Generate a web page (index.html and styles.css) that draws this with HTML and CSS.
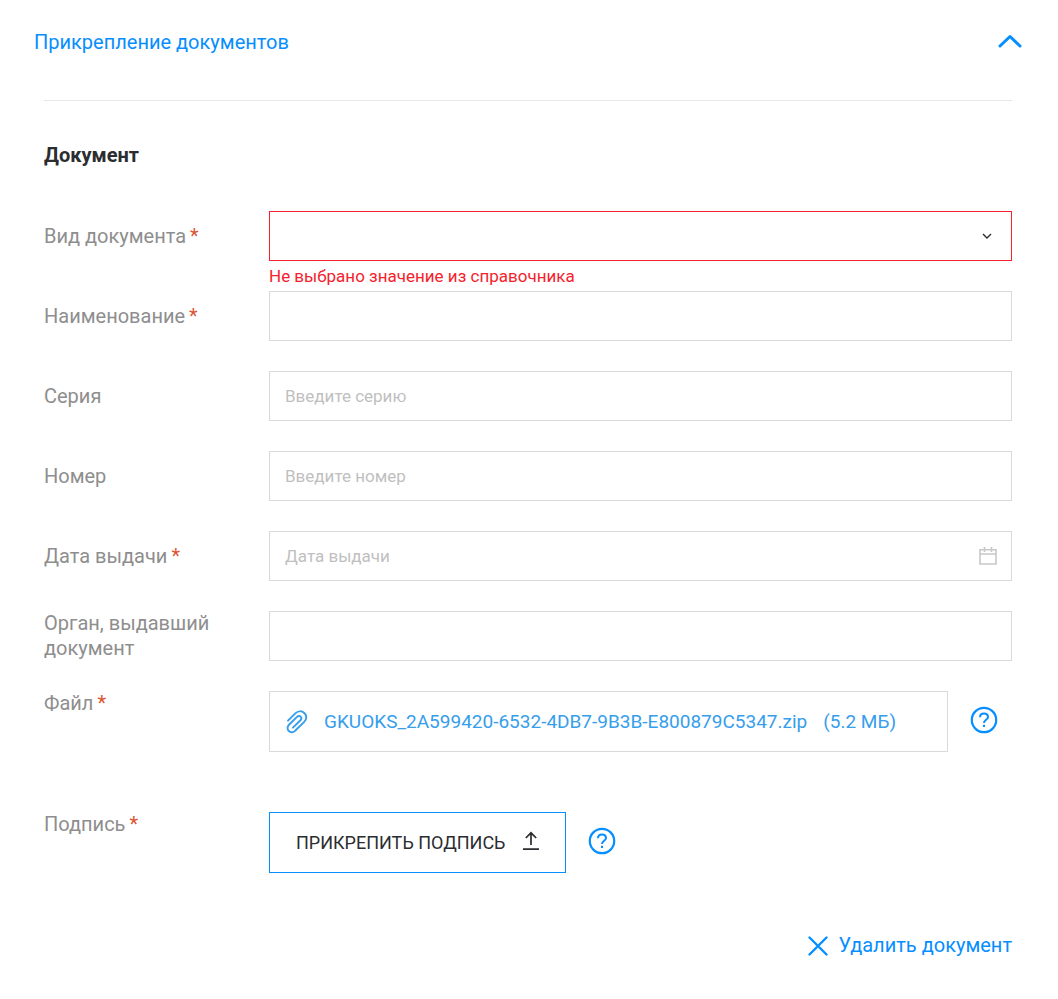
FILE: index.html
```
<!DOCTYPE html>
<html lang="ru">
<head>
    <meta charset="UTF-8">
    <meta name="viewport" content="width=device-width, initial-scale=1.0">
    <title>Прикрепление документов</title>
    <link rel="stylesheet" href="styles.css">
</head>
<body>
    <main class="panel">
        <header class="panel-header">
            <h1 class="panel-title">Прикрепление документов</h1>
            <button type="button" class="icon-button" aria-label="Свернуть" aria-expanded="true">
                <svg width="24" height="18" viewBox="0 0 24 18" fill="none" stroke="currentColor" stroke-width="3" stroke-linecap="round" stroke-linejoin="round">
                    <path d="M2 12L12 2.5L22 12"></path>
                </svg>
            </button>
        </header>

        <form class="document">
            <h2 class="document-title">Документ</h2>

            <div class="row row-error">
                <label class="label" for="doc-type">Вид документа<span class="required">*</span></label>
                <div class="field">
                    <select id="doc-type" class="control control-invalid" aria-describedby="doc-type-error">
                        <option value=""></option>
                    </select>
                    <svg class="field-icon arrow" width="10" height="6" viewBox="0 0 10 6" fill="none" stroke="currentColor" stroke-width="1.4">
                        <path d="M1 1L5 5L9 1"></path>
                    </svg>
                </div>
                <p class="error" id="doc-type-error">Не выбрано значение из справочника</p>
            </div>

            <div class="row">
                <label class="label" for="doc-name">Наименование<span class="required">*</span></label>
                <input type="text" id="doc-name" class="control">
            </div>

            <div class="row">
                <label class="label" for="doc-series">Серия</label>
                <input type="text" id="doc-series" class="control" placeholder="Введите серию">
            </div>

            <div class="row">
                <label class="label" for="doc-number">Номер</label>
                <input type="text" id="doc-number" class="control" placeholder="Введите номер">
            </div>

            <div class="row">
                <label class="label" for="doc-date">Дата выдачи<span class="required">*</span></label>
                <div class="field">
                    <input type="text" id="doc-date" class="control" placeholder="Дата выдачи">
                    <svg class="field-icon calendar" width="18" height="18" viewBox="0 0 18 18" fill="none" stroke="currentColor" stroke-width="1.6">
                        <path d="M1 2.8H17V17H1ZM1 7H17M5.5 0V5M12.5 0V5"></path>
                    </svg>
                </div>
            </div>

            <div class="row">
                <label class="label" for="doc-issuer">Орган, выдавший документ</label>
                <input type="text" id="doc-issuer" class="control">
            </div>

            <div class="row row-top">
                <span class="label">Файл<span class="required">*</span></span>
                <div class="attachment">
                    <div class="file-box">
                        <a href="#" class="file-link">
                            <svg width="22" height="24" viewBox="0 0 22 24" fill="none" stroke="currentColor" stroke-width="1.9" stroke-linecap="round" stroke-linejoin="round">
                                <path d="M2 10.6L9.3 3.4C12 .7 15.8.7 18.3 3C21 5.6 20.8 9.2 18.2 11.8L9.6 20.3C7.4 22.6 4.6 22.8 2.8 21C1 19.2 1.1 16.6 3.2 14.5L11 6.9C12.2 5.7 13.7 5.7 14.7 6.7C15.7 7.7 15.6 9.1 14.5 10.3L6.9 17.6"></path>
                            </svg>
                            <span>GKUOKS_2A599420-6532-4DB7-9B3B-E800879C5347.zip</span>
                            <span class="file-size">(5.2 МБ)</span>
                        </a>
                    </div>
                    <button type="button" class="icon-button help" aria-label="Справка о файле">
                        <svg width="28" height="28" viewBox="0 0 28 28" fill="none" stroke="currentColor" stroke-width="2">
                            <circle cx="14" cy="14" r="12.2" stroke-width="2.2"></circle>
                            <path d="M10 11.2C10 8.8 11.7 7.5 14 7.5C16.4 7.5 18 8.9 18 11C18 13.7 14 14 14 17"></path>
                            <path d="M14 18.8V21"></path>
                        </svg>
                    </button>
                </div>
            </div>

            <div class="row row-top">
                <span class="label">Подпись<span class="required">*</span></span>
                <div class="attachment">
                    <button type="button" class="sign-button">
                        ПРИКРЕПИТЬ ПОДПИСЬ
                        <svg width="16" height="24" viewBox="0 0 16 24" fill="none" stroke="currentColor" stroke-width="1.7">
                            <path d="M8 14V2M2.8 7L8 1.8L13.2 7M0 18.2H16"></path>
                        </svg>
                    </button>
                    <button type="button" class="icon-button help" aria-label="Справка о подписи">
                        <svg width="28" height="28" viewBox="0 0 28 28" fill="none" stroke="currentColor" stroke-width="2">
                            <circle cx="14" cy="14" r="12.2" stroke-width="2.2"></circle>
                            <path d="M10 11.2C10 8.8 11.7 7.5 14 7.5C16.4 7.5 18 8.9 18 11C18 13.7 14 14 14 17"></path>
                            <path d="M14 18.8V21"></path>
                        </svg>
                    </button>
                </div>
            </div>

            <button type="button" class="delete-button">
                <svg width="20" height="20" viewBox="0 0 20 20" fill="none" stroke="currentColor" stroke-width="2.4" stroke-linecap="round">
                    <path d="M1.5 1.5L18.5 18.5M18.5 1.5L1.5 18.5"></path>
                </svg>
                Удалить документ
            </button>
        </form>
    </main>
</body>
</html>
```
FILE: styles.css
```
:root {
    --primary-color: #068eff;
    --link-color: #369eeb;
    --error-color: #f5222d;
    --required-color: #dd5533;
    --text-color: #2b2d30;
    --label-color: #8e8e8e;
    --placeholder-color: #bfbfbf;
    --border-color: #d9d9d9;
}

* {
    box-sizing: border-box;
}

body {
    margin: 0;
    background-color: white;
    color: var(--text-color);
    font-family: Roboto, "Liberation Sans", sans-serif;
    font-size: 20px;
    line-height: 25px;
}

button,
input,
select {
    font-family: inherit;
}

button {
    padding: 0;
    border: 0;
    background: none;
    cursor: pointer;
}

svg {
    display: block;
    flex: none;
}

.panel {
    padding: 30px 36px 30px 34px;
}

.panel-header {
    display: flex;
    align-items: center;
    justify-content: space-between;
    margin-bottom: 45px;
}

.panel-title {
    margin: 0;
    color: var(--primary-color);
    font-size: 20px;
    font-weight: 400;
}

.icon-button {
    color: var(--primary-color);
}

.document {
    display: flex;
    flex-direction: column;
    margin: 0 10px;
    padding-top: 42px;
    border-top: 1px solid #e8e8e8;
}

.document-title {
    margin: 0 0 43px;
    font-size: 20px;
    font-weight: 700;
}

.row {
    display: grid;
    grid-template-columns: 225px 1fr;
    align-items: center;
    margin-bottom: 30px;
}

.row-error {
    margin-bottom: 0;
}

.row-top {
    align-items: start;
    margin-bottom: 60px;
}

.label {
    padding-right: 30px;
    color: var(--label-color);
}

.required {
    margin-left: 4px;
    color: var(--required-color);
}

.field {
    position: relative;
}

.control {
    display: block;
    width: 100%;
    height: 50px;
    padding: 0 15px;
    border: 1px solid var(--border-color);
    border-radius: 0;
    background-color: white;
    color: var(--text-color);
    font-size: 17px;
    appearance: none;
}

.control::placeholder {
    color: var(--placeholder-color);
    opacity: 1;
}

.control-invalid {
    border-color: var(--error-color);
}

.field-icon {
    position: absolute;
    top: 50%;
    transform: translateY(-50%);
    pointer-events: none;
}

.arrow {
    right: 20px;
}

.calendar {
    right: 15px;
    color: #c8c8c8;
}

.error {
    grid-column: 2;
    margin: 0;
    padding: 3px 0 2px;
    color: var(--error-color);
    font-size: 17px;
}

.attachment {
    display: flex;
    align-items: flex-start;
    gap: 22px;
}

.file-box {
    flex: 1;
    display: flex;
    align-items: center;
    height: 61px;
    padding: 0 16px;
    border: 1px solid var(--border-color);
}

.file-link {
    display: flex;
    align-items: center;
    gap: 16px;
    color: var(--link-color);
    font-size: 19px;
    text-decoration: none;
}

.help {
    margin-top: 15px;
}

.file-box + .help {
    margin-right: 14px;
}

.sign-button {
    display: flex;
    align-items: center;
    gap: 18px;
    height: 61px;
    padding: 0 26px;
    border: 1px solid var(--primary-color);
    color: var(--text-color);
    font-size: 18px;
}

.delete-button {
    display: flex;
    align-items: center;
    align-self: flex-end;
    gap: 10px;
    color: var(--primary-color);
    font-size: 20px;
    line-height: 25px;
}
```
